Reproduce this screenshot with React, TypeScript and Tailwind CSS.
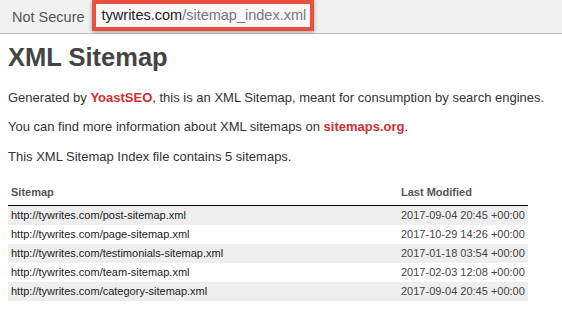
const rows = [
  ["http://tywrites.com/post-sitemap.xml", "2017-09-04 20:45 +00:00"],
  ["http://tywrites.com/page-sitemap.xml", "2017-10-29 14:26 +00:00"],
  ["http://tywrites.com/testimonials-sitemap.xml", "2017-01-18 03:54 +00:00"],
  ["http://tywrites.com/team-sitemap.xml", "2017-02-03 12:08 +00:00"],
  ["http://tywrites.com/category-sitemap.xml", "2017-09-04 20:45 +00:00"],
];

export default function App() {
  return (
    <div className="w-[562px] h-[327px] overflow-hidden bg-white font-['Liberation_Sans',Arial,sans-serif] text-[#333]">
      <div className="h-[34px] bg-[#f1f1f1] border-b border-[#bdbdbd] flex items-start">
        <span className="ml-[12px] mt-[7px] text-[14.5px] text-[#555]">Not Secure</span>
        <div className="ml-[7px] h-[31px] border-[4px] border-[#e8503f] shadow-[0_1px_4px_rgba(0,0,0,0.35)] bg-[#f7f7f7] flex items-center pl-[6px] pr-[4px] text-[14.5px]">
          <span className="text-[#222]">tywrites.com</span>
          <span className="text-[#777]">/sitemap_index.xml</span>
        </div>
      </div>
      <div className="px-[8px]">
        <h1 className="mt-[7px] text-[25.5px] font-bold text-[#444] leading-[32px]">XML Sitemap</h1>
        <p className="mt-[17px] text-[13px] leading-[16px]">
          Generated by <a className="text-[#d02e2e] font-bold">YoastSEO</a>, this is an XML Sitemap, meant for consumption by search engines.
        </p>
        <p className="mt-[13px] text-[13px] leading-[16px]">
          You can find more information about XML sitemaps on <a className="text-[#d02e2e] font-bold">sitemaps.org</a>.
        </p>
        <p className="mt-[14px] text-[13px] leading-[16px]">This XML Sitemap Index file contains 5 sitemaps.</p>
        <table className="mt-[19px] w-[520px] text-[11px] border-collapse">
          <thead>
            <tr className="border-b border-black">
              <th className="text-left font-bold text-[#555] px-[3px] pb-[4px] leading-[17px]">Sitemap</th>
              <th className="text-left font-bold text-[#555] px-[3px] pb-[4px] leading-[17px] w-[130px] whitespace-nowrap">Last Modified</th>
            </tr>
          </thead>
          <tbody>
            {rows.map(([loc, mod], i) => (
              <tr key={loc} className={i % 2 === 0 ? "bg-[#eeeeee]" : "bg-white"}>
                <td className="px-[3px] py-[2px] leading-[15px] text-[#222] whitespace-nowrap">{loc}</td>
                <td className="px-[3px] py-[2px] leading-[15px] text-[#444] whitespace-nowrap">{mod}</td>
              </tr>
            ))}
          </tbody>
        </table>
      </div>
    </div>
  );
}
